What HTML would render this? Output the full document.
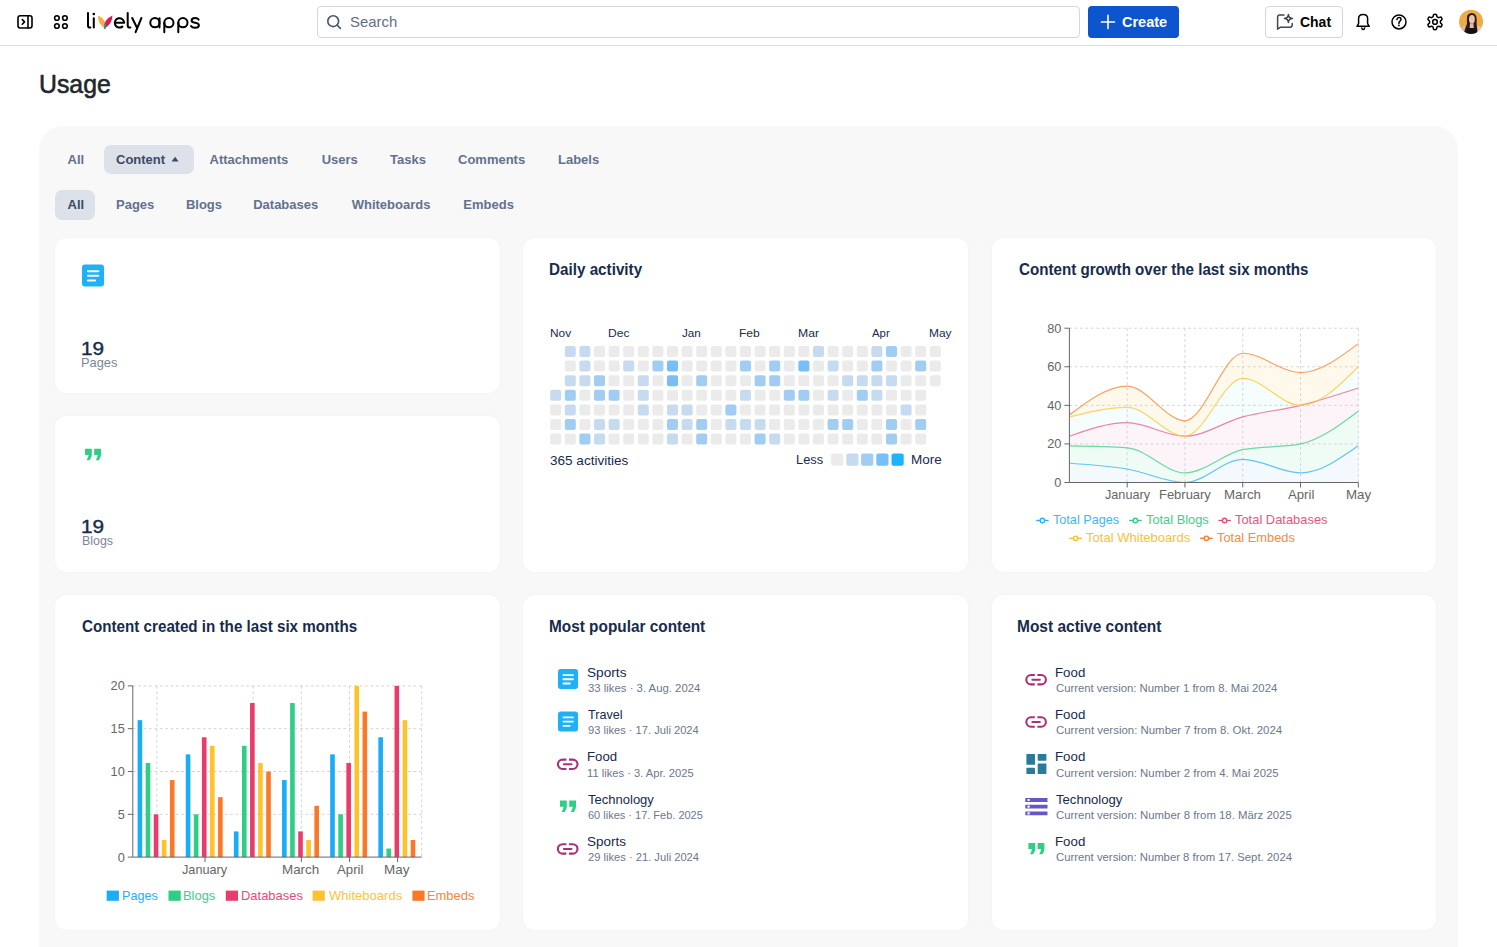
<!DOCTYPE html>
<html><head><meta charset="utf-8"><title>Usage</title>
<style>
html,body{margin:0;padding:0;background:#fff;}
body{width:1497px;height:947px;overflow:hidden;position:relative;font-family:"Liberation Sans", sans-serif;}
.t{position:absolute;white-space:nowrap;line-height:1.117;}
.r{position:absolute;}
.s{position:absolute;overflow:visible;}
</style></head><body>

<div class="r" style="left:0.00px;top:45.00px;width:1497.00px;height:1.00px;background:#dcdfe4;border-radius:0px;"></div>
<svg class="s" style="left:10.00px;top:8.00px;" width="30" height="30" viewBox="10.00 8.00 30 30"><g fill="none" stroke="#000" stroke-width="1.6" stroke-linecap="round" stroke-linejoin="round"><rect x="18" y="15.8" width="14" height="12.2" rx="2.2"/><path d="M28 15.8V28"/><path d="M22.3 19.6L24.5 21.9L22.3 24.2"/></g></svg>
<svg class="s" style="left:50.00px;top:10.00px;" width="22" height="22" viewBox="50.00 10.00 22 22"><g fill="none" stroke="#000" stroke-width="1.6"><circle cx="56.9" cy="18" r="2.3"/><circle cx="64.9" cy="18" r="2.3"/><circle cx="56.9" cy="26" r="2.3"/><circle cx="64.9" cy="26" r="2.3"/></g></svg>
<svg class="s" style="left:80.00px;top:5.00px;" width="125" height="32" viewBox="80.00 5.00 125 32"><g fill="none" stroke="#000" stroke-width="2" stroke-linecap="round" stroke-linejoin="round"><path d="M88 13V25.4Q88 27.6 90.4 27.6"/><path d="M93.8 18.2V27.4"/><path d="M115.2 22.8H124.2A4.7 4.7 0 1 0 122.4 26.6"/><path d="M127.7 13V25.4Q127.7 27.6 130.3 27.6"/><path d="M132.2 18L137 27.8M141.4 18L135.6 32.2"/><circle cx="154.9" cy="22.7" r="4.6"/><path d="M159.5 18.3V27.5"/><circle cx="168.9" cy="22.7" r="4.6"/><path d="M164.3 22.7V32.2"/><circle cx="182.9" cy="22.7" r="4.6"/><path d="M178.3 22.7V32.2"/><path d="M198.6 19.6Q197.6 17.9 195 17.9Q191.6 17.9 191.6 20.4Q191.6 22.2 195 22.7Q198.9 23.2 198.9 25.3Q198.9 27.8 195 27.8Q192 27.8 191 26"/></g><circle cx="93.8" cy="14" r="1.3" fill="#000"/><path d="M98.2 15.6Q96.9 22.9 105.6 29.2Q107.3 19.9 98.2 15.6Z" fill="#f9ab45"/><path d="M112.4 15.6Q112.8 22.9 104.2 29.2Q103 19.9 112.4 15.6Z" fill="#dd1657"/><path d="M105.1 22.4Q103.2 26 104.3 28.9Q105 29.2 105.6 28.9Q106.9 25.8 105.1 22.4Z" fill="#17a5a8"/></svg>
<div class="r" style="left:317.30px;top:6.30px;width:762.90px;height:31.30px;background:#fff;border-radius:4px;box-sizing:border-box;border:1px solid #d3d6db;"></div>
<svg class="s" style="left:322.00px;top:10.00px;" width="26" height="26" viewBox="322.00 10.00 26 26"><g fill="none" stroke="#44546f" stroke-width="1.6" stroke-linecap="round"><circle cx="333.2" cy="21.2" r="5.4"/><path d="M337.2 25.2L340.4 28.4"/></g></svg>
<div class="t" style="left:349.66px;top:14.47px;font-size:14.4px;color:#626f86;transform:scale(1.0364,1.0);transform-origin:0 13.03px;">Search</div>
<div class="r" style="left:1088.00px;top:6.00px;width:91.00px;height:31.60px;background:#0c55cf;border-radius:4px;"></div>
<svg class="s" style="left:1096.00px;top:10.00px;" width="24" height="24" viewBox="1096.00 10.00 24 24"><g stroke="#fff" stroke-width="1.6" stroke-linecap="round"><path d="M1108 15.4V28.6M1101.4 22H1114.6"/></g></svg>
<div class="t" style="left:1122.00px;top:14.28px;font-size:14.5px;color:#fff;font-weight:700;">Create</div>
<div class="r" style="left:1265.00px;top:6.30px;width:77.80px;height:31.30px;background:#fff;border-radius:4px;box-sizing:border-box;border:1px solid #d3d6db;"></div>
<svg class="s" style="left:1272.00px;top:10.00px;" width="26" height="26" viewBox="1272.00 10.00 26 26"><g fill="none" stroke="#44474e" stroke-width="1.5" stroke-linecap="round" stroke-linejoin="round"><path d="M1284 15H1279.8Q1277.6 15 1277.6 17.2V29.2L1280.6 27.2H1290Q1292.2 27.2 1292.2 25V23.4"/><path d="M1288.4 14.4Q1288.6 18.2 1292.4 18.4Q1288.6 18.6 1288.4 22.4Q1288.2 18.6 1284.4 18.4Q1288.2 18.2 1288.4 14.4Z"/></g></svg>
<div class="t" style="left:1299.60px;top:14.95px;font-size:14.2px;color:#000;font-weight:700;transform:scale(0.9844,1.0);transform-origin:0 12.85px;">Chat</div>
<svg class="s" style="left:1350.00px;top:8.00px;" width="26" height="26" viewBox="1350.00 8.00 26 26"><g fill="none" stroke="#000" stroke-width="1.5" stroke-linejoin="round"><path d="M1357 26.3H1369.3L1367.6 23.6V18.5Q1367.6 14.5 1363.1 14.5Q1358.6 14.5 1358.6 18.5V23.6Z"/><path d="M1361.5 27.3Q1362 29.4 1363.2 29.4Q1364.4 29.4 1364.9 27.3"/></g></svg>
<svg class="s" style="left:1386.00px;top:8.00px;" width="26" height="26" viewBox="1386.00 8.00 26 26"><g fill="none" stroke="#000" stroke-width="1.5" stroke-linecap="round"><circle cx="1399" cy="21.9" r="7"/><path d="M1396.9 19.6Q1397.2 17.6 1399.1 17.6Q1401 17.6 1401 19.3Q1401 20.5 1399.7 21.4Q1398.9 22 1398.9 23.4"/></g><circle cx="1398.9" cy="25.4" r="0.9" fill="#000"/></svg>
<svg class="s" style="left:1424.00px;top:8.00px;" width="26" height="26" viewBox="1424.00 8.00 26 26"><g transform="translate(1435 21.95) scale(0.78) translate(-12 -12)" fill="none" stroke="#000" stroke-width="1.95" stroke-linejoin="round"><path d="M12.22 2h-.44a2 2 0 0 0-2 2v.18a2 2 0 0 1-1 1.73l-.43.25a2 2 0 0 1-2 0l-.15-.08a2 2 0 0 0-2.73.73l-.22.38a2 2 0 0 0 .73 2.73l.15.1a2 2 0 0 1 1 1.72v.51a2 2 0 0 1-1 1.74l-.15.09a2 2 0 0 0-.73 2.73l.22.38a2 2 0 0 0 2.73.73l.15-.08a2 2 0 0 1 2 0l.43.25a2 2 0 0 1 1 1.73V20a2 2 0 0 0 2 2h.44a2 2 0 0 0 2-2v-.18a2 2 0 0 1 1-1.73l.43-.25a2 2 0 0 1 2 0l.15.08a2 2 0 0 0 2.73-.73l.22-.39a2 2 0 0 0-.73-2.73l-.15-.08a2 2 0 0 1-1-1.74v-.5a2 2 0 0 1 1-1.74l.15-.09a2 2 0 0 0 .73-2.73l-.22-.38a2 2 0 0 0-2.73-.73l-.15.08a2 2 0 0 1-2 0l-.43-.25a2 2 0 0 1-1-1.73V4a2 2 0 0 0-2-2z"/><circle cx="12" cy="12" r="3"/></g></svg>
<svg class="s" style="left:1456.00px;top:7.00px;" width="30" height="30" viewBox="1456.00 7.00 30 30"><defs><clipPath id="av"><circle cx="1471.05" cy="21.75" r="12"/></clipPath></defs><circle cx="1471.05" cy="21.75" r="12" fill="#eeaa44"/><g clip-path="url(#av)"><path d="M1461.5 27Q1464 25 1467 25.5L1466.5 34H1461Z" fill="#d9b7aa"/><path d="M1481 27Q1478 25 1475.5 25.5L1476 34H1481Z" fill="#e6c4b6"/><path d="M1463.6 34Q1465.4 27 1467 24Q1466.6 19 1467.3 15.6Q1468.6 13 1471.6 13Q1475 13.2 1476.2 16Q1476.9 19 1476.6 24Q1477.6 29 1477.4 34Z" fill="#2b1a15"/><ellipse cx="1471.9" cy="19.2" rx="2.9" ry="4.3" fill="#e9c3b4"/><path d="M1470 23Q1471.6 23.8 1473.4 23L1473.8 28.2H1469.6Z" fill="#e2b9aa"/><path d="M1467 28.5Q1471.5 27.4 1476.4 28.5L1476.6 34H1466.8Z" fill="#151112"/></g></svg>
<div class="t" style="left:38.98px;top:70.92px;font-size:24.4px;color:#22272b;transform:scale(1.0174,1.07);transform-origin:0 22.08px;-webkit-text-stroke:0.55px #22272b;">Usage</div>
<div class="r" style="left:38.90px;top:125.90px;width:1419.60px;height:900.00px;background:#f8f8f8;border-radius:24px;"></div>
<div class="r" style="left:104.00px;top:144.70px;width:90.00px;height:29.50px;background:#dde1ea;border-radius:7px;"></div>
<div class="t" style="left:67.50px;top:152.94px;font-size:13px;color:#63718e;font-weight:700;">All</div>
<div class="t" style="left:209.50px;top:152.94px;font-size:13px;color:#63718e;font-weight:700;">Attachments</div>
<div class="t" style="left:321.70px;top:152.94px;font-size:13px;color:#63718e;font-weight:700;">Users</div>
<div class="t" style="left:390.00px;top:152.94px;font-size:13px;color:#63718e;font-weight:700;">Tasks</div>
<div class="t" style="left:458.00px;top:152.94px;font-size:13px;color:#63718e;font-weight:700;">Comments</div>
<div class="t" style="left:558.00px;top:152.94px;font-size:13px;color:#63718e;font-weight:700;">Labels</div>
<div class="t" style="left:116.00px;top:152.94px;font-size:13px;color:#3b4a66;font-weight:700;">Content</div>
<svg class="s" style="left:168.00px;top:152.00px;" width="14" height="14" viewBox="168.00 152.00 14 14"><path d="M171.6 161.4L175.1 156.8L178.6 161.4Z" fill="#3b4a66"/></svg>
<div class="r" style="left:55.30px;top:189.80px;width:39.50px;height:30.40px;background:#dde1ea;border-radius:7px;"></div>
<div class="t" style="left:67.50px;top:197.54px;font-size:13px;color:#3b4a66;font-weight:700;">All</div>
<div class="t" style="left:116.00px;top:197.54px;font-size:13px;color:#63718e;font-weight:700;">Pages</div>
<div class="t" style="left:185.90px;top:197.54px;font-size:13px;color:#63718e;font-weight:700;">Blogs</div>
<div class="t" style="left:253.20px;top:197.54px;font-size:13px;color:#63718e;font-weight:700;">Databases</div>
<div class="t" style="left:351.70px;top:197.54px;font-size:13px;color:#63718e;font-weight:700;">Whiteboards</div>
<div class="t" style="left:463.30px;top:197.54px;font-size:13px;color:#63718e;font-weight:700;">Embeds</div>
<div class="r" style="left:55.10px;top:237.70px;width:444.50px;height:155.60px;background:#fff;border-radius:12px;box-shadow:0 0 5px rgba(0,0,0,0.025);"></div>
<div class="r" style="left:55.10px;top:416.10px;width:444.50px;height:155.80px;background:#fff;border-radius:12px;box-shadow:0 0 5px rgba(0,0,0,0.025);"></div>
<div class="r" style="left:523.10px;top:237.70px;width:444.50px;height:334.20px;background:#fff;border-radius:12px;box-shadow:0 0 5px rgba(0,0,0,0.025);"></div>
<div class="r" style="left:991.50px;top:237.70px;width:444.50px;height:334.20px;background:#fff;border-radius:12px;box-shadow:0 0 5px rgba(0,0,0,0.025);"></div>
<div class="r" style="left:55.10px;top:594.70px;width:444.50px;height:335.10px;background:#fff;border-radius:12px;box-shadow:0 0 5px rgba(0,0,0,0.025);"></div>
<div class="r" style="left:523.10px;top:594.70px;width:444.50px;height:335.10px;background:#fff;border-radius:12px;box-shadow:0 0 5px rgba(0,0,0,0.025);"></div>
<div class="r" style="left:991.50px;top:594.70px;width:444.50px;height:335.10px;background:#fff;border-radius:12px;box-shadow:0 0 5px rgba(0,0,0,0.025);"></div>
<svg class="s" style="left:80.00px;top:262.00px;" width="26" height="26" viewBox="80.00 262.00 26 26"><rect x="82" y="264.6" width="22" height="22" rx="3.00" fill="#1fb1f8"/><g stroke="#fff" stroke-width="2.10" stroke-linecap="round"><path d="M88.00 271.20H98.40M88.00 275.80H98.40M88.00 280.50H95.00"/></g></svg>
<div class="t" style="left:80.95px;top:336.98px;font-size:19.8px;color:#172b4d;transform:scale(1.0476,0.93);transform-origin:0 17.92px;-webkit-text-stroke:0.45px #172b4d;">19</div>
<div class="t" style="left:80.96px;top:356.78px;font-size:12.4px;color:#7a869a;transform:scale(1.0353,1.0);transform-origin:0 11.22px;">Pages</div>
<svg class="s" style="left:80.00px;top:440.00px;" width="26" height="26" viewBox="80.00 440.00 26 26"><path d="M85.00 448.80H91.80V454.80Q91.80 457.30 89.60 460.20H86.60Q88.40 457.30 88.60 455.00H85.00Z M94.20 448.80H101.00V454.80Q101.00 457.30 98.80 460.20H95.80Q97.60 457.30 97.80 455.00H94.20Z" fill="#2fce84"/></svg>
<div class="t" style="left:80.95px;top:515.38px;font-size:19.8px;color:#172b4d;transform:scale(1.0476,0.93);transform-origin:0 17.92px;-webkit-text-stroke:0.45px #172b4d;">19</div>
<div class="t" style="left:82.00px;top:535.18px;font-size:12.4px;color:#7a869a;">Blogs</div>
<div class="t" style="left:549.18px;top:261.73px;font-size:15px;color:#172b4d;font-weight:700;transform:scale(1.0154,1.1);transform-origin:0 13.58px;">Daily activity</div>
<div class="t" style="left:549.64px;top:327.46px;font-size:11.2px;color:#172b4d;transform:scale(1.0632,1.05);transform-origin:0 10.14px;">Nov</div>
<div class="t" style="left:607.62px;top:327.46px;font-size:11.2px;color:#172b4d;transform:scale(1.0789,1.05);transform-origin:0 10.14px;">Dec</div>
<div class="t" style="left:681.70px;top:327.46px;font-size:11.2px;color:#172b4d;transform:scale(1.0444,1.05);transform-origin:0 10.14px;">Jan</div>
<div class="t" style="left:738.92px;top:327.46px;font-size:11.2px;color:#172b4d;transform:scale(1.0778,1.05);transform-origin:0 10.14px;">Feb</div>
<div class="t" style="left:797.61px;top:327.46px;font-size:11.2px;color:#172b4d;transform:scale(1.0889,1.05);transform-origin:0 10.14px;">Mar</div>
<div class="t" style="left:871.60px;top:327.46px;font-size:11.2px;color:#172b4d;transform:scale(1.0167,1.05);transform-origin:0 10.14px;">Apr</div>
<div class="t" style="left:928.93px;top:327.46px;font-size:11.2px;color:#172b4d;transform:scale(1.0650,1.05);transform-origin:0 10.14px;">May</div>
<svg class="s" style="left:545.00px;top:340.00px;" width="410" height="110" viewBox="545.00 340.00 410 110"><rect x="564.80" y="346.00" width="11" height="11" rx="2" fill="#c6dbf0"/><rect x="579.40" y="346.00" width="11" height="11" rx="2" fill="#c6dbf0"/><rect x="594.00" y="346.00" width="11" height="11" rx="2" fill="#ebebeb"/><rect x="608.60" y="346.00" width="11" height="11" rx="2" fill="#ebebeb"/><rect x="623.20" y="346.00" width="11" height="11" rx="2" fill="#ebebeb"/><rect x="637.80" y="346.00" width="11" height="11" rx="2" fill="#ebebeb"/><rect x="652.40" y="346.00" width="11" height="11" rx="2" fill="#ebebeb"/><rect x="667.00" y="346.00" width="11" height="11" rx="2" fill="#ebebeb"/><rect x="681.60" y="346.00" width="11" height="11" rx="2" fill="#ebebeb"/><rect x="696.20" y="346.00" width="11" height="11" rx="2" fill="#ebebeb"/><rect x="710.80" y="346.00" width="11" height="11" rx="2" fill="#ebebeb"/><rect x="725.40" y="346.00" width="11" height="11" rx="2" fill="#ebebeb"/><rect x="740.00" y="346.00" width="11" height="11" rx="2" fill="#ebebeb"/><rect x="754.60" y="346.00" width="11" height="11" rx="2" fill="#ebebeb"/><rect x="769.20" y="346.00" width="11" height="11" rx="2" fill="#ebebeb"/><rect x="783.80" y="346.00" width="11" height="11" rx="2" fill="#ebebeb"/><rect x="798.40" y="346.00" width="11" height="11" rx="2" fill="#ebebeb"/><rect x="813.00" y="346.00" width="11" height="11" rx="2" fill="#c6dbf0"/><rect x="827.60" y="346.00" width="11" height="11" rx="2" fill="#ebebeb"/><rect x="842.20" y="346.00" width="11" height="11" rx="2" fill="#ebebeb"/><rect x="856.80" y="346.00" width="11" height="11" rx="2" fill="#ebebeb"/><rect x="871.40" y="346.00" width="11" height="11" rx="2" fill="#c6dbf0"/><rect x="886.00" y="346.00" width="11" height="11" rx="2" fill="#a1cdf3"/><rect x="900.60" y="346.00" width="11" height="11" rx="2" fill="#ebebeb"/><rect x="915.20" y="346.00" width="11" height="11" rx="2" fill="#ebebeb"/><rect x="929.80" y="346.00" width="11" height="11" rx="2" fill="#ebebeb"/><rect x="564.80" y="360.60" width="11" height="11" rx="2" fill="#ebebeb"/><rect x="579.40" y="360.60" width="11" height="11" rx="2" fill="#c6dbf0"/><rect x="594.00" y="360.60" width="11" height="11" rx="2" fill="#ebebeb"/><rect x="608.60" y="360.60" width="11" height="11" rx="2" fill="#ebebeb"/><rect x="623.20" y="360.60" width="11" height="11" rx="2" fill="#c6dbf0"/><rect x="637.80" y="360.60" width="11" height="11" rx="2" fill="#ebebeb"/><rect x="652.40" y="360.60" width="11" height="11" rx="2" fill="#a1cdf3"/><rect x="667.00" y="360.60" width="11" height="11" rx="2" fill="#76bff8"/><rect x="681.60" y="360.60" width="11" height="11" rx="2" fill="#ebebeb"/><rect x="696.20" y="360.60" width="11" height="11" rx="2" fill="#ebebeb"/><rect x="710.80" y="360.60" width="11" height="11" rx="2" fill="#ebebeb"/><rect x="725.40" y="360.60" width="11" height="11" rx="2" fill="#ebebeb"/><rect x="740.00" y="360.60" width="11" height="11" rx="2" fill="#a1cdf3"/><rect x="754.60" y="360.60" width="11" height="11" rx="2" fill="#ebebeb"/><rect x="769.20" y="360.60" width="11" height="11" rx="2" fill="#a1cdf3"/><rect x="783.80" y="360.60" width="11" height="11" rx="2" fill="#ebebeb"/><rect x="798.40" y="360.60" width="11" height="11" rx="2" fill="#76bff8"/><rect x="813.00" y="360.60" width="11" height="11" rx="2" fill="#ebebeb"/><rect x="827.60" y="360.60" width="11" height="11" rx="2" fill="#c6dbf0"/><rect x="842.20" y="360.60" width="11" height="11" rx="2" fill="#ebebeb"/><rect x="856.80" y="360.60" width="11" height="11" rx="2" fill="#ebebeb"/><rect x="871.40" y="360.60" width="11" height="11" rx="2" fill="#a1cdf3"/><rect x="886.00" y="360.60" width="11" height="11" rx="2" fill="#ebebeb"/><rect x="900.60" y="360.60" width="11" height="11" rx="2" fill="#ebebeb"/><rect x="915.20" y="360.60" width="11" height="11" rx="2" fill="#a1cdf3"/><rect x="929.80" y="360.60" width="11" height="11" rx="2" fill="#ebebeb"/><rect x="564.80" y="375.20" width="11" height="11" rx="2" fill="#c6dbf0"/><rect x="579.40" y="375.20" width="11" height="11" rx="2" fill="#c6dbf0"/><rect x="594.00" y="375.20" width="11" height="11" rx="2" fill="#a1cdf3"/><rect x="608.60" y="375.20" width="11" height="11" rx="2" fill="#ebebeb"/><rect x="623.20" y="375.20" width="11" height="11" rx="2" fill="#ebebeb"/><rect x="637.80" y="375.20" width="11" height="11" rx="2" fill="#c6dbf0"/><rect x="652.40" y="375.20" width="11" height="11" rx="2" fill="#ebebeb"/><rect x="667.00" y="375.20" width="11" height="11" rx="2" fill="#76bff8"/><rect x="681.60" y="375.20" width="11" height="11" rx="2" fill="#ebebeb"/><rect x="696.20" y="375.20" width="11" height="11" rx="2" fill="#a1cdf3"/><rect x="710.80" y="375.20" width="11" height="11" rx="2" fill="#ebebeb"/><rect x="725.40" y="375.20" width="11" height="11" rx="2" fill="#ebebeb"/><rect x="740.00" y="375.20" width="11" height="11" rx="2" fill="#ebebeb"/><rect x="754.60" y="375.20" width="11" height="11" rx="2" fill="#a1cdf3"/><rect x="769.20" y="375.20" width="11" height="11" rx="2" fill="#a1cdf3"/><rect x="783.80" y="375.20" width="11" height="11" rx="2" fill="#ebebeb"/><rect x="798.40" y="375.20" width="11" height="11" rx="2" fill="#ebebeb"/><rect x="813.00" y="375.20" width="11" height="11" rx="2" fill="#ebebeb"/><rect x="827.60" y="375.20" width="11" height="11" rx="2" fill="#ebebeb"/><rect x="842.20" y="375.20" width="11" height="11" rx="2" fill="#c6dbf0"/><rect x="856.80" y="375.20" width="11" height="11" rx="2" fill="#c6dbf0"/><rect x="871.40" y="375.20" width="11" height="11" rx="2" fill="#c6dbf0"/><rect x="886.00" y="375.20" width="11" height="11" rx="2" fill="#c6dbf0"/><rect x="900.60" y="375.20" width="11" height="11" rx="2" fill="#ebebeb"/><rect x="915.20" y="375.20" width="11" height="11" rx="2" fill="#ebebeb"/><rect x="929.80" y="375.20" width="11" height="11" rx="2" fill="#ebebeb"/><rect x="550.20" y="389.80" width="11" height="11" rx="2" fill="#c6dbf0"/><rect x="564.80" y="389.80" width="11" height="11" rx="2" fill="#a1cdf3"/><rect x="579.40" y="389.80" width="11" height="11" rx="2" fill="#ebebeb"/><rect x="594.00" y="389.80" width="11" height="11" rx="2" fill="#a1cdf3"/><rect x="608.60" y="389.80" width="11" height="11" rx="2" fill="#a1cdf3"/><rect x="623.20" y="389.80" width="11" height="11" rx="2" fill="#ebebeb"/><rect x="637.80" y="389.80" width="11" height="11" rx="2" fill="#c6dbf0"/><rect x="652.40" y="389.80" width="11" height="11" rx="2" fill="#ebebeb"/><rect x="667.00" y="389.80" width="11" height="11" rx="2" fill="#ebebeb"/><rect x="681.60" y="389.80" width="11" height="11" rx="2" fill="#ebebeb"/><rect x="696.20" y="389.80" width="11" height="11" rx="2" fill="#ebebeb"/><rect x="710.80" y="389.80" width="11" height="11" rx="2" fill="#ebebeb"/><rect x="725.40" y="389.80" width="11" height="11" rx="2" fill="#ebebeb"/><rect x="740.00" y="389.80" width="11" height="11" rx="2" fill="#c6dbf0"/><rect x="754.60" y="389.80" width="11" height="11" rx="2" fill="#ebebeb"/><rect x="769.20" y="389.80" width="11" height="11" rx="2" fill="#ebebeb"/><rect x="783.80" y="389.80" width="11" height="11" rx="2" fill="#a1cdf3"/><rect x="798.40" y="389.80" width="11" height="11" rx="2" fill="#a1cdf3"/><rect x="813.00" y="389.80" width="11" height="11" rx="2" fill="#ebebeb"/><rect x="827.60" y="389.80" width="11" height="11" rx="2" fill="#c6dbf0"/><rect x="842.20" y="389.80" width="11" height="11" rx="2" fill="#ebebeb"/><rect x="856.80" y="389.80" width="11" height="11" rx="2" fill="#a1cdf3"/><rect x="871.40" y="389.80" width="11" height="11" rx="2" fill="#c6dbf0"/><rect x="886.00" y="389.80" width="11" height="11" rx="2" fill="#ebebeb"/><rect x="900.60" y="389.80" width="11" height="11" rx="2" fill="#ebebeb"/><rect x="915.20" y="389.80" width="11" height="11" rx="2" fill="#ebebeb"/><rect x="550.20" y="404.40" width="11" height="11" rx="2" fill="#ebebeb"/><rect x="564.80" y="404.40" width="11" height="11" rx="2" fill="#c6dbf0"/><rect x="579.40" y="404.40" width="11" height="11" rx="2" fill="#ebebeb"/><rect x="594.00" y="404.40" width="11" height="11" rx="2" fill="#ebebeb"/><rect x="608.60" y="404.40" width="11" height="11" rx="2" fill="#ebebeb"/><rect x="623.20" y="404.40" width="11" height="11" rx="2" fill="#ebebeb"/><rect x="637.80" y="404.40" width="11" height="11" rx="2" fill="#c6dbf0"/><rect x="652.40" y="404.40" width="11" height="11" rx="2" fill="#ebebeb"/><rect x="667.00" y="404.40" width="11" height="11" rx="2" fill="#c6dbf0"/><rect x="681.60" y="404.40" width="11" height="11" rx="2" fill="#c6dbf0"/><rect x="696.20" y="404.40" width="11" height="11" rx="2" fill="#ebebeb"/><rect x="710.80" y="404.40" width="11" height="11" rx="2" fill="#ebebeb"/><rect x="725.40" y="404.40" width="11" height="11" rx="2" fill="#a1cdf3"/><rect x="740.00" y="404.40" width="11" height="11" rx="2" fill="#ebebeb"/><rect x="754.60" y="404.40" width="11" height="11" rx="2" fill="#ebebeb"/><rect x="769.20" y="404.40" width="11" height="11" rx="2" fill="#ebebeb"/><rect x="783.80" y="404.40" width="11" height="11" rx="2" fill="#ebebeb"/><rect x="798.40" y="404.40" width="11" height="11" rx="2" fill="#ebebeb"/><rect x="813.00" y="404.40" width="11" height="11" rx="2" fill="#ebebeb"/><rect x="827.60" y="404.40" width="11" height="11" rx="2" fill="#ebebeb"/><rect x="842.20" y="404.40" width="11" height="11" rx="2" fill="#ebebeb"/><rect x="856.80" y="404.40" width="11" height="11" rx="2" fill="#ebebeb"/><rect x="871.40" y="404.40" width="11" height="11" rx="2" fill="#ebebeb"/><rect x="886.00" y="404.40" width="11" height="11" rx="2" fill="#ebebeb"/><rect x="900.60" y="404.40" width="11" height="11" rx="2" fill="#c6dbf0"/><rect x="915.20" y="404.40" width="11" height="11" rx="2" fill="#ebebeb"/><rect x="550.20" y="419.00" width="11" height="11" rx="2" fill="#ebebeb"/><rect x="564.80" y="419.00" width="11" height="11" rx="2" fill="#a1cdf3"/><rect x="579.40" y="419.00" width="11" height="11" rx="2" fill="#ebebeb"/><rect x="594.00" y="419.00" width="11" height="11" rx="2" fill="#c6dbf0"/><rect x="608.60" y="419.00" width="11" height="11" rx="2" fill="#c6dbf0"/><rect x="623.20" y="419.00" width="11" height="11" rx="2" fill="#ebebeb"/><rect x="637.80" y="419.00" width="11" height="11" rx="2" fill="#ebebeb"/><rect x="652.40" y="419.00" width="11" height="11" rx="2" fill="#ebebeb"/><rect x="667.00" y="419.00" width="11" height="11" rx="2" fill="#a1cdf3"/><rect x="681.60" y="419.00" width="11" height="11" rx="2" fill="#c6dbf0"/><rect x="696.20" y="419.00" width="11" height="11" rx="2" fill="#a1cdf3"/><rect x="710.80" y="419.00" width="11" height="11" rx="2" fill="#ebebeb"/><rect x="725.40" y="419.00" width="11" height="11" rx="2" fill="#c6dbf0"/><rect x="740.00" y="419.00" width="11" height="11" rx="2" fill="#c6dbf0"/><rect x="754.60" y="419.00" width="11" height="11" rx="2" fill="#c6dbf0"/><rect x="769.20" y="419.00" width="11" height="11" rx="2" fill="#ebebeb"/><rect x="783.80" y="419.00" width="11" height="11" rx="2" fill="#ebebeb"/><rect x="798.40" y="419.00" width="11" height="11" rx="2" fill="#ebebeb"/><rect x="813.00" y="419.00" width="11" height="11" rx="2" fill="#ebebeb"/><rect x="827.60" y="419.00" width="11" height="11" rx="2" fill="#a1cdf3"/><rect x="842.20" y="419.00" width="11" height="11" rx="2" fill="#a1cdf3"/><rect x="856.80" y="419.00" width="11" height="11" rx="2" fill="#ebebeb"/><rect x="871.40" y="419.00" width="11" height="11" rx="2" fill="#ebebeb"/><rect x="886.00" y="419.00" width="11" height="11" rx="2" fill="#a1cdf3"/><rect x="900.60" y="419.00" width="11" height="11" rx="2" fill="#ebebeb"/><rect x="915.20" y="419.00" width="11" height="11" rx="2" fill="#a1cdf3"/><rect x="550.20" y="433.60" width="11" height="11" rx="2" fill="#ebebeb"/><rect x="564.80" y="433.60" width="11" height="11" rx="2" fill="#ebebeb"/><rect x="579.40" y="433.60" width="11" height="11" rx="2" fill="#a1cdf3"/><rect x="594.00" y="433.60" width="11" height="11" rx="2" fill="#c6dbf0"/><rect x="608.60" y="433.60" width="11" height="11" rx="2" fill="#ebebeb"/><rect x="623.20" y="433.60" width="11" height="11" rx="2" fill="#ebebeb"/><rect x="637.80" y="433.60" width="11" height="11" rx="2" fill="#ebebeb"/><rect x="652.40" y="433.60" width="11" height="11" rx="2" fill="#ebebeb"/><rect x="667.00" y="433.60" width="11" height="11" rx="2" fill="#c6dbf0"/><rect x="681.60" y="433.60" width="11" height="11" rx="2" fill="#ebebeb"/><rect x="696.20" y="433.60" width="11" height="11" rx="2" fill="#a1cdf3"/><rect x="710.80" y="433.60" width="11" height="11" rx="2" fill="#ebebeb"/><rect x="725.40" y="433.60" width="11" height="11" rx="2" fill="#ebebeb"/><rect x="740.00" y="433.60" width="11" height="11" rx="2" fill="#ebebeb"/><rect x="754.60" y="433.60" width="11" height="11" rx="2" fill="#a1cdf3"/><rect x="769.20" y="433.60" width="11" height="11" rx="2" fill="#c6dbf0"/><rect x="783.80" y="433.60" width="11" height="11" rx="2" fill="#ebebeb"/><rect x="798.40" y="433.60" width="11" height="11" rx="2" fill="#ebebeb"/><rect x="813.00" y="433.60" width="11" height="11" rx="2" fill="#ebebeb"/><rect x="827.60" y="433.60" width="11" height="11" rx="2" fill="#ebebeb"/><rect x="842.20" y="433.60" width="11" height="11" rx="2" fill="#ebebeb"/><rect x="856.80" y="433.60" width="11" height="11" rx="2" fill="#ebebeb"/><rect x="871.40" y="433.60" width="11" height="11" rx="2" fill="#ebebeb"/><rect x="886.00" y="433.60" width="11" height="11" rx="2" fill="#a1cdf3"/><rect x="900.60" y="433.60" width="11" height="11" rx="2" fill="#ebebeb"/><rect x="915.20" y="433.60" width="11" height="11" rx="2" fill="#ebebeb"/></svg>
<div class="t" style="left:550.20px;top:452.88px;font-size:13.5px;color:#172b4d;transform:scale(1.0038,1.0);transform-origin:0 12.22px;">365 activities</div>
<div class="t" style="left:795.96px;top:454.08px;font-size:12.4px;color:#172b4d;transform:scale(1.0360,1.08);transform-origin:0 11.22px;">Less</div>
<svg class="s" style="left:828.00px;top:450.00px;" width="80" height="20" viewBox="828.00 450.00 80 20"><rect x="831.1" y="453.6" width="12.2" height="12.2" rx="2" fill="#ebebeb"/><rect x="846.3" y="453.6" width="12.2" height="12.2" rx="2" fill="#c6dbf0"/><rect x="861.1" y="453.6" width="12.2" height="12.2" rx="2" fill="#a1cdf3"/><rect x="876.3" y="453.6" width="12.2" height="12.2" rx="2" fill="#76bff8"/><rect x="891.5" y="453.6" width="12.2" height="12.2" rx="2" fill="#1eb3fd"/></svg>
<div class="t" style="left:910.71px;top:454.08px;font-size:12.4px;color:#172b4d;transform:scale(1.0889,1.08);transform-origin:0 11.22px;">More</div>
<div class="t" style="left:1018.60px;top:261.83px;font-size:15.1px;color:#172b4d;font-weight:700;transform:scale(1.0035,1.1);transform-origin:0 13.67px;">Content growth over the last six months</div>
<svg class="s" style="left:1035.00px;top:315.00px;" width="345" height="180" viewBox="1035.00 315.00 345 180"><path d="M1069.40,463.21C1088.66,464.50 1107.92,465.78 1127.18,469.00C1146.44,472.21 1165.70,482.50 1184.96,482.50C1204.22,482.50 1223.48,459.36 1242.74,459.36C1262.00,459.36 1281.26,472.86 1300.52,472.86C1319.78,472.86 1339.04,459.36 1358.30,445.85L1358.30,482.50C1339.04,482.50 1319.78,482.50 1300.52,482.50C1281.26,482.50 1262.00,482.50 1242.74,482.50C1223.48,482.50 1204.22,482.50 1184.96,482.50C1165.70,482.50 1146.44,482.50 1127.18,482.50C1107.92,482.50 1088.66,482.50 1069.40,482.50Z" fill="#f4f9fd"/><path d="M1069.40,445.85C1088.66,446.18 1107.92,446.50 1127.18,447.78C1146.44,449.07 1165.70,472.86 1184.96,472.86C1204.22,472.86 1223.48,453.57 1242.74,449.71C1262.00,445.85 1281.26,447.78 1300.52,443.93C1319.78,440.07 1339.04,425.60 1358.30,411.14L1358.30,445.85C1339.04,459.36 1319.78,472.86 1300.52,472.86C1281.26,472.86 1262.00,459.36 1242.74,459.36C1223.48,459.36 1204.22,482.50 1184.96,482.50C1165.70,482.50 1146.44,472.21 1127.18,469.00C1107.92,465.78 1088.66,464.50 1069.40,463.21Z" fill="#effcf6"/><path d="M1069.40,436.21C1088.66,429.46 1107.92,422.71 1127.18,422.71C1146.44,422.71 1165.70,436.21 1184.96,436.21C1204.22,436.21 1223.48,422.07 1242.74,416.92C1262.00,411.78 1281.26,410.17 1300.52,405.35C1319.78,400.53 1339.04,394.26 1358.30,387.99L1358.30,411.14C1339.04,425.60 1319.78,440.07 1300.52,443.93C1281.26,447.78 1262.00,445.85 1242.74,449.71C1223.48,453.57 1204.22,472.86 1184.96,472.86C1165.70,472.86 1146.44,449.07 1127.18,447.78C1107.92,446.50 1088.66,446.18 1069.40,445.85Z" fill="#fdf4fa"/><path d="M1069.40,416.92C1088.66,412.10 1107.92,407.28 1127.18,407.28C1146.44,407.28 1165.70,436.21 1184.96,436.21C1204.22,436.21 1223.48,378.35 1242.74,378.35C1262.00,378.35 1281.26,405.35 1300.52,405.35C1319.78,405.35 1339.04,386.06 1358.30,366.77L1358.30,387.99C1339.04,394.26 1319.78,400.53 1300.52,405.35C1281.26,410.17 1262.00,411.78 1242.74,416.92C1223.48,422.07 1204.22,436.21 1184.96,436.21C1165.70,436.21 1146.44,422.71 1127.18,422.71C1107.92,422.71 1088.66,429.46 1069.40,436.21Z" fill="#f5fdfd"/><path d="M1069.40,414.99C1088.66,400.53 1107.92,386.06 1127.18,386.06C1146.44,386.06 1165.70,420.78 1184.96,420.78C1204.22,420.78 1223.48,353.27 1242.74,353.27C1262.00,353.27 1281.26,372.56 1300.52,372.56C1319.78,372.56 1339.04,358.10 1358.30,343.63L1358.30,366.77C1339.04,386.06 1319.78,405.35 1300.52,405.35C1281.26,405.35 1262.00,378.35 1242.74,378.35C1223.48,378.35 1204.22,436.21 1184.96,436.21C1165.70,436.21 1146.44,407.28 1127.18,407.28C1107.92,407.28 1088.66,412.10 1069.40,416.92Z" fill="#fef9ea"/><g stroke="#d4d4d4" stroke-width="1" stroke-dasharray="2.7 2.7" fill="none"><path d="M1069.40 443.93H1358.30"/><path d="M1069.40 405.35H1358.30"/><path d="M1069.40 366.77H1358.30"/><path d="M1069.40 328.20H1358.30"/><path d="M1127.18 328.20V482.50"/><path d="M1184.96 328.20V482.50"/><path d="M1242.74 328.20V482.50"/><path d="M1300.52 328.20V482.50"/><path d="M1358.30 328.20V482.50"/></g><path d="M1069.40,463.21C1088.66,464.50 1107.92,465.78 1127.18,469.00C1146.44,472.21 1165.70,482.50 1184.96,482.50C1204.22,482.50 1223.48,459.36 1242.74,459.36C1262.00,459.36 1281.26,472.86 1300.52,472.86C1319.78,472.86 1339.04,459.36 1358.30,445.85" fill="none" stroke="#3db6f2" stroke-width="1.2" stroke-opacity="0.8"/><path d="M1069.40,445.85C1088.66,446.18 1107.92,446.50 1127.18,447.78C1146.44,449.07 1165.70,472.86 1184.96,472.86C1204.22,472.86 1223.48,453.57 1242.74,449.71C1262.00,445.85 1281.26,447.78 1300.52,443.93C1319.78,440.07 1339.04,425.60 1358.30,411.14" fill="none" stroke="#48cf8f" stroke-width="1.2" stroke-opacity="0.8"/><path d="M1069.40,436.21C1088.66,429.46 1107.92,422.71 1127.18,422.71C1146.44,422.71 1165.70,436.21 1184.96,436.21C1204.22,436.21 1223.48,422.07 1242.74,416.92C1262.00,411.78 1281.26,410.17 1300.52,405.35C1319.78,400.53 1339.04,394.26 1358.30,387.99" fill="none" stroke="#e8668e" stroke-width="1.2" stroke-opacity="0.8"/><path d="M1069.40,416.92C1088.66,412.10 1107.92,407.28 1127.18,407.28C1146.44,407.28 1165.70,436.21 1184.96,436.21C1204.22,436.21 1223.48,378.35 1242.74,378.35C1262.00,378.35 1281.26,405.35 1300.52,405.35C1319.78,405.35 1339.04,386.06 1358.30,366.77" fill="none" stroke="#fdc945" stroke-width="1.2" stroke-opacity="0.8"/><path d="M1069.40,414.99C1088.66,400.53 1107.92,386.06 1127.18,386.06C1146.44,386.06 1165.70,420.78 1184.96,420.78C1204.22,420.78 1223.48,353.27 1242.74,353.27C1262.00,353.27 1281.26,372.56 1300.52,372.56C1319.78,372.56 1339.04,358.10 1358.30,343.63" fill="none" stroke="#f98a3e" stroke-width="1.2" stroke-opacity="0.8"/><g stroke="#666" stroke-width="1" fill="none"><path d="M1069.40 328.20V482.50H1358.30"/><path d="M1064.40 482.50H1069.40"/><path d="M1064.40 443.93H1069.40"/><path d="M1064.40 405.35H1069.40"/><path d="M1064.40 366.77H1069.40"/><path d="M1064.40 328.20H1069.40"/><path d="M1127.18 482.50V487.50"/><path d="M1184.96 482.50V487.50"/><path d="M1242.74 482.50V487.50"/><path d="M1300.52 482.50V487.50"/><path d="M1358.30 482.50V487.50"/></g></svg>
<div class="t" style="left:1054.30px;top:476.02px;font-size:12.8px;color:#666;">0</div>
<div class="t" style="left:1047.20px;top:437.44px;font-size:12.8px;color:#666;">20</div>
<div class="t" style="left:1047.20px;top:398.87px;font-size:12.8px;color:#666;">40</div>
<div class="t" style="left:1047.20px;top:360.29px;font-size:12.8px;color:#666;">60</div>
<div class="t" style="left:1047.20px;top:321.72px;font-size:12.8px;color:#666;">80</div>
<div class="t" style="left:1104.70px;top:487.92px;font-size:12.8px;color:#666;transform:scale(0.9891,1.0);transform-origin:0 11.58px;">January</div>
<div class="t" style="left:1158.69px;top:487.92px;font-size:12.8px;color:#666;transform:scale(1.0120,1.0);transform-origin:0 11.58px;">February</div>
<div class="t" style="left:1223.96px;top:487.92px;font-size:12.8px;color:#666;transform:scale(1.0382,1.0);transform-origin:0 11.58px;">March</div>
<div class="t" style="left:1288.00px;top:487.92px;font-size:12.8px;color:#666;transform:scale(1.0280,1.0);transform-origin:0 11.58px;">April</div>
<div class="t" style="left:1345.56px;top:487.92px;font-size:12.8px;color:#666;transform:scale(1.0391,1.0);transform-origin:0 11.58px;">May</div>
<svg class="s" style="left:1030.00px;top:505.00px;" width="310" height="45" viewBox="1030.00 505.00 310 45"><g fill="none" stroke="#2ab3f7" stroke-width="1.4"><path d="M1036.20 520.50H1048.60"/><circle cx="1042.40" cy="520.50" r="2.2" fill="#fff"/></g><g fill="none" stroke="#33cd88" stroke-width="1.4"><path d="M1129.20 520.50H1141.60"/><circle cx="1135.40" cy="520.50" r="2.2" fill="#fff"/></g><g fill="none" stroke="#e54c7a" stroke-width="1.4"><path d="M1218.40 520.50H1230.80"/><circle cx="1224.60" cy="520.50" r="2.2" fill="#fff"/></g><g fill="none" stroke="#fdbd2e" stroke-width="1.4"><path d="M1069.40 538.30H1081.80"/><circle cx="1075.60" cy="538.30" r="2.2" fill="#fff"/></g><g fill="none" stroke="#fa7d2f" stroke-width="1.4"><path d="M1200.20 538.30H1212.60"/><circle cx="1206.40" cy="538.30" r="2.2" fill="#fff"/></g></svg>
<div class="t" style="left:1053.20px;top:513.30px;font-size:12.6px;color:#3ab8f8;transform:scale(1.0045,1.0);transform-origin:0 11.40px;">Total Pages</div>
<div class="t" style="left:1146.00px;top:513.30px;font-size:12.6px;color:#3fcf8c;transform:scale(1.0177,1.0);transform-origin:0 11.40px;">Total Blogs</div>
<div class="t" style="left:1235.40px;top:513.30px;font-size:12.6px;color:#e8567f;transform:scale(1.0244,1.0);transform-origin:0 11.40px;">Total Databases</div>
<div class="t" style="left:1085.90px;top:531.00px;font-size:12.6px;color:#fdc135;transform:scale(1.0356,1.0);transform-origin:0 11.40px;">Total Whiteboards</div>
<div class="t" style="left:1217.40px;top:531.00px;font-size:12.6px;color:#fb8a3e;transform:scale(1.0211,1.0);transform-origin:0 11.40px;">Total Embeds</div>
<div class="t" style="left:82.00px;top:618.74px;font-size:15.2px;color:#172b4d;font-weight:700;transform:scale(1.0000,1.1);transform-origin:0 13.76px;">Content created in the last six months</div>
<svg class="s" style="left:100.00px;top:670.00px;" width="340" height="200" viewBox="100.00 670.00 340 200"><g stroke="#d4d4d4" stroke-width="1" stroke-dasharray="2.7 2.7" fill="none"><path d="M132.80 814.30H421.70"/><path d="M132.80 771.50H421.70"/><path d="M132.80 728.70H421.70"/><path d="M132.80 685.90H421.70"/><path d="M156.88 685.90V857.10"/><path d="M253.18 685.90V857.10"/><path d="M301.33 685.90V857.10"/><path d="M349.48 685.90V857.10"/><path d="M421.70 685.90V857.10"/></g><rect x="137.60" y="720.14" width="4.6" height="136.96" fill="#1aacf6"/><rect x="145.68" y="762.94" width="4.6" height="94.16" fill="#2fcd86"/><rect x="153.76" y="814.30" width="4.6" height="42.80" fill="#e83d6c"/><rect x="161.84" y="839.98" width="4.6" height="17.12" fill="#fdc32b"/><rect x="169.92" y="780.06" width="4.6" height="77.04" fill="#fa782a"/><rect x="185.75" y="754.38" width="4.6" height="102.72" fill="#1aacf6"/><rect x="193.83" y="814.30" width="4.6" height="42.80" fill="#2fcd86"/><rect x="201.91" y="737.26" width="4.6" height="119.84" fill="#e83d6c"/><rect x="209.99" y="745.82" width="4.6" height="111.28" fill="#fdc32b"/><rect x="218.07" y="797.18" width="4.6" height="59.92" fill="#fa782a"/><rect x="233.90" y="831.42" width="4.6" height="25.68" fill="#1aacf6"/><rect x="241.98" y="745.82" width="4.6" height="111.28" fill="#2fcd86"/><rect x="250.06" y="703.02" width="4.6" height="154.08" fill="#e83d6c"/><rect x="258.14" y="762.94" width="4.6" height="94.16" fill="#fdc32b"/><rect x="266.22" y="771.50" width="4.6" height="85.60" fill="#fa782a"/><rect x="282.05" y="780.06" width="4.6" height="77.04" fill="#1aacf6"/><rect x="290.13" y="703.02" width="4.6" height="154.08" fill="#2fcd86"/><rect x="298.21" y="831.42" width="4.6" height="25.68" fill="#e83d6c"/><rect x="306.29" y="839.98" width="4.6" height="17.12" fill="#fdc32b"/><rect x="314.37" y="805.74" width="4.6" height="51.36" fill="#fa782a"/><rect x="330.20" y="754.38" width="4.6" height="102.72" fill="#1aacf6"/><rect x="338.28" y="814.30" width="4.6" height="42.80" fill="#2fcd86"/><rect x="346.36" y="762.94" width="4.6" height="94.16" fill="#e83d6c"/><rect x="354.44" y="685.90" width="4.6" height="171.20" fill="#fdc32b"/><rect x="362.52" y="711.58" width="4.6" height="145.52" fill="#fa782a"/><rect x="378.35" y="737.26" width="4.6" height="119.84" fill="#1aacf6"/><rect x="386.43" y="848.54" width="4.6" height="8.56" fill="#2fcd86"/><rect x="394.51" y="685.90" width="4.6" height="171.20" fill="#e83d6c"/><rect x="402.59" y="720.14" width="4.6" height="136.96" fill="#fdc32b"/><rect x="410.67" y="839.98" width="4.6" height="17.12" fill="#fa782a"/><g stroke="#666" stroke-width="1" fill="none"><path d="M132.80 685.90V857.10H421.70"/><path d="M127.80 857.10H132.80"/><path d="M127.80 814.30H132.80"/><path d="M127.80 771.50H132.80"/><path d="M127.80 728.70H132.80"/><path d="M127.80 685.90H132.80"/><path d="M205.03 857.10V862.10"/><path d="M301.33 857.10V862.10"/><path d="M349.48 857.10V862.10"/><path d="M397.62 857.10V862.10"/></g></svg>
<div class="t" style="left:117.70px;top:850.62px;font-size:12.8px;color:#666;">0</div>
<div class="t" style="left:117.70px;top:807.82px;font-size:12.8px;color:#666;">5</div>
<div class="t" style="left:110.60px;top:765.02px;font-size:12.8px;color:#666;">10</div>
<div class="t" style="left:110.60px;top:722.22px;font-size:12.8px;color:#666;">15</div>
<div class="t" style="left:110.60px;top:679.42px;font-size:12.8px;color:#666;">20</div>
<div class="t" style="left:182.30px;top:862.92px;font-size:12.8px;color:#666;transform:scale(0.9913,1.0);transform-origin:0 11.58px;">January</div>
<div class="t" style="left:282.35px;top:862.92px;font-size:12.8px;color:#666;transform:scale(1.0471,1.0);transform-origin:0 11.58px;">March</div>
<div class="t" style="left:336.80px;top:862.92px;font-size:12.8px;color:#666;transform:scale(1.0320,1.0);transform-origin:0 11.58px;">April</div>
<div class="t" style="left:384.45px;top:862.92px;font-size:12.8px;color:#666;transform:scale(1.0522,1.0);transform-origin:0 11.58px;">May</div>
<svg class="s" style="left:100.00px;top:880.00px;" width="400" height="30" viewBox="100.00 880.00 400 30"><rect x="106.7" y="890.6" width="12.2" height="10.2" fill="#1aacf6"/><rect x="168.5" y="890.6" width="12.2" height="10.2" fill="#2fcd86"/><rect x="225.8" y="890.6" width="12.2" height="10.2" fill="#e83d6c"/><rect x="312.6" y="890.6" width="12.2" height="10.2" fill="#fdc32b"/><rect x="412.4" y="890.6" width="12.2" height="10.2" fill="#fa782a"/></svg>
<div class="t" style="left:122.10px;top:888.60px;font-size:12.6px;color:#25b0f7;">Pages</div>
<div class="t" style="left:183.37px;top:888.60px;font-size:12.6px;color:#3bd08c;transform:scale(1.0258,1.0);transform-origin:0 11.40px;">Blogs</div>
<div class="t" style="left:241.17px;top:888.60px;font-size:12.6px;color:#e8497a;transform:scale(1.0288,1.0);transform-origin:0 11.40px;">Databases</div>
<div class="t" style="left:329.00px;top:888.60px;font-size:12.6px;color:#fdc43a;transform:scale(1.0352,1.0);transform-origin:0 11.40px;">Whiteboards</div>
<div class="t" style="left:427.48px;top:888.60px;font-size:12.6px;color:#fb843a;transform:scale(1.0244,1.0);transform-origin:0 11.40px;">Embeds</div>
<div class="t" style="left:549.09px;top:619.14px;font-size:15.2px;color:#172b4d;font-weight:700;transform:scale(1.0117,1.1);transform-origin:0 13.76px;">Most popular content</div>
<div class="t" style="left:1017.28px;top:619.14px;font-size:15.2px;color:#172b4d;font-weight:700;transform:scale(1.0191,1.1);transform-origin:0 13.76px;">Most active content</div>
<div class="t" style="left:586.65px;top:665.63px;font-size:13px;color:#172b4d;transform:scale(1.0500,1.0);transform-origin:0 11.77px;">Sports</div>
<div class="t" style="left:587.70px;top:682.08px;font-size:11.4px;color:#6b778c;transform:scale(0.9965,1.0);transform-origin:0 10.32px;">33 likes · 3. Aug. 2024</div>
<div class="t" style="left:587.70px;top:707.93px;font-size:13px;color:#172b4d;transform:scale(0.9714,1.0);transform-origin:0 11.77px;">Travel</div>
<div class="t" style="left:587.70px;top:724.38px;font-size:11.4px;color:#6b778c;transform:scale(0.9770,1.0);transform-origin:0 10.32px;">93 likes · 17. Juli 2024</div>
<div class="t" style="left:586.69px;top:750.24px;font-size:13px;color:#172b4d;transform:scale(1.0143,1.0);transform-origin:0 11.77px;">Food</div>
<div class="t" style="left:586.72px;top:766.68px;font-size:11.4px;color:#6b778c;transform:scale(0.9806,1.0);transform-origin:0 10.32px;">11 likes · 3. Apr. 2025</div>
<div class="t" style="left:587.70px;top:792.53px;font-size:13px;color:#172b4d;transform:scale(1.0015,1.0);transform-origin:0 11.77px;">Technology</div>
<div class="t" style="left:587.70px;top:808.98px;font-size:11.4px;color:#6b778c;transform:scale(0.9647,1.0);transform-origin:0 10.32px;">60 likes · 17. Feb. 2025</div>
<div class="t" style="left:586.66px;top:834.83px;font-size:13px;color:#172b4d;transform:scale(1.0361,1.0);transform-origin:0 11.77px;">Sports</div>
<div class="t" style="left:587.70px;top:851.28px;font-size:11.4px;color:#6b778c;transform:scale(0.9796,1.0);transform-origin:0 10.32px;">29 likes · 21. Juli 2024</div>
<svg class="s" style="left:543.10px;top:655.00px;" width="60" height="220" viewBox="543.10 655.00 60 220"><rect x="558.1" y="669.1" width="20" height="20" rx="2.73" fill="#1fb1f8"/><g stroke="#fff" stroke-width="1.91" stroke-linecap="round"><path d="M563.55 675.10H573.01M563.55 679.28H573.01M563.55 683.55H569.92"/></g><rect x="558.1" y="711.4" width="20" height="20" rx="2.73" fill="#1fb1f8"/><g stroke="#fff" stroke-width="1.91" stroke-linecap="round"><path d="M563.55 717.40H573.01M563.55 721.58H573.01M563.55 725.85H569.92"/></g><g fill="none" stroke="#a8317a" stroke-width="2.1" stroke-linecap="butt"><path d="M566.50 759.60H562.70A4.7 4.7 0 0 0 562.70 769.00H566.50"/><path d="M569.10 759.60H572.90A4.7 4.7 0 0 1 572.90 769.00H569.10"/></g><path d="M564.00 764.30H571.60" stroke="#a8317a" stroke-width="2" stroke-linecap="round"/><path d="M560.10 800.60H566.90V806.60Q566.90 809.10 564.70 812.00H561.70Q563.50 809.10 563.70 806.80H560.10Z M569.30 800.60H576.10V806.60Q576.10 809.10 573.90 812.00H570.90Q572.70 809.10 572.90 806.80H569.30Z" fill="#2fce84"/><g fill="none" stroke="#a8317a" stroke-width="2.1" stroke-linecap="butt"><path d="M566.50 844.20H562.70A4.7 4.7 0 0 0 562.70 853.60H566.50"/><path d="M569.10 844.20H572.90A4.7 4.7 0 0 1 572.90 853.60H569.10"/></g><path d="M564.00 848.90H571.60" stroke="#a8317a" stroke-width="2" stroke-linecap="round"/></svg>
<div class="t" style="left:1054.98px;top:665.63px;font-size:13px;color:#172b4d;transform:scale(1.0214,1.0);transform-origin:0 11.77px;">Food</div>
<div class="t" style="left:1056.00px;top:682.08px;font-size:11.4px;color:#6b778c;transform:scale(0.9928,1.0);transform-origin:0 10.32px;">Current version: Number 1 from 8. Mai 2024</div>
<div class="t" style="left:1054.98px;top:707.93px;font-size:13px;color:#172b4d;transform:scale(1.0214,1.0);transform-origin:0 11.77px;">Food</div>
<div class="t" style="left:1056.00px;top:724.38px;font-size:11.4px;color:#6b778c;transform:scale(1.0036,1.0);transform-origin:0 10.32px;">Current version: Number 7 from 8. Okt. 2024</div>
<div class="t" style="left:1054.98px;top:750.24px;font-size:13px;color:#172b4d;transform:scale(1.0214,1.0);transform-origin:0 11.77px;">Food</div>
<div class="t" style="left:1056.00px;top:766.68px;font-size:11.4px;color:#6b778c;transform:scale(0.9991,1.0);transform-origin:0 10.32px;">Current version: Number 2 from 4. Mai 2025</div>
<div class="t" style="left:1056.00px;top:792.53px;font-size:13px;color:#172b4d;transform:scale(1.0076,1.0);transform-origin:0 11.77px;">Technology</div>
<div class="t" style="left:1056.00px;top:808.98px;font-size:11.4px;color:#6b778c;transform:scale(0.9983,1.0);transform-origin:0 10.32px;">Current version: Number 8 from 18. März 2025</div>
<div class="t" style="left:1054.98px;top:834.83px;font-size:13px;color:#172b4d;transform:scale(1.0214,1.0);transform-origin:0 11.77px;">Food</div>
<div class="t" style="left:1056.00px;top:851.28px;font-size:11.4px;color:#6b778c;transform:scale(0.9941,1.0);transform-origin:0 10.32px;">Current version: Number 8 from 17. Sept. 2024</div>
<svg class="s" style="left:1011.50px;top:655.00px;" width="60" height="220" viewBox="1011.50 655.00 60 220"><g fill="none" stroke="#a8317a" stroke-width="2.1" stroke-linecap="butt"><path d="M1034.30 675.00H1030.50A4.7 4.7 0 0 0 1030.50 684.40H1034.30"/><path d="M1036.90 675.00H1040.70A4.7 4.7 0 0 1 1040.70 684.40H1036.90"/></g><path d="M1031.80 679.70H1039.40" stroke="#a8317a" stroke-width="2" stroke-linecap="round"/><g fill="none" stroke="#a8317a" stroke-width="2.1" stroke-linecap="butt"><path d="M1034.30 717.30H1030.50A4.7 4.7 0 0 0 1030.50 726.70H1034.30"/><path d="M1036.90 717.30H1040.70A4.7 4.7 0 0 1 1040.70 726.70H1036.90"/></g><path d="M1031.80 722.00H1039.40" stroke="#a8317a" stroke-width="2" stroke-linecap="round"/><g fill="#287c9b"><rect x="1025.90" y="754.00" width="8.6" height="10.8" rx="0.6"/><rect x="1037.20" y="754.00" width="8.7" height="6.7" rx="0.6"/><rect x="1025.90" y="767.80" width="8.6" height="6.2" rx="0.6"/><rect x="1037.20" y="763.40" width="8.7" height="10.6" rx="0.6"/></g><g fill="#6756c6"><rect x="1024.80" y="798.00" width="22.2" height="3.9" rx="0.5"/><rect x="1024.80" y="804.70" width="22.2" height="3.9" rx="0.5"/><rect x="1024.80" y="811.40" width="22.2" height="3.9" rx="0.5"/></g><g fill="#fff"><rect x="1027.00" y="798.90" width="2.2" height="2.1" rx="0.4"/><rect x="1027.00" y="805.60" width="2.2" height="2.1" rx="0.4"/><rect x="1027.00" y="812.30" width="2.2" height="2.1" rx="0.4"/></g><path d="M1027.90 842.90H1034.70V848.90Q1034.70 851.40 1032.50 854.30H1029.50Q1031.30 851.40 1031.50 849.10H1027.90Z M1037.10 842.90H1043.90V848.90Q1043.90 851.40 1041.70 854.30H1038.70Q1040.50 851.40 1040.70 849.10H1037.10Z" fill="#2fce84"/></svg>
</body></html>
